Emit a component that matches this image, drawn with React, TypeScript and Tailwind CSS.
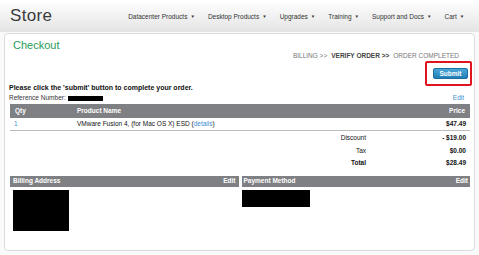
const navItems = ['Datacenter Products', 'Desktop Products', 'Upgrades', 'Training', 'Support and Docs', 'Cart'];

function Caret() {
  return <span className="ml-[3px] text-[4.5px] align-middle">▼</span>;
}

export default function App() {
  return (
    <div className="w-[479px] h-[255px] bg-[#fafafa] overflow-hidden text-[#111]" style={{ fontFamily: '"Liberation Sans", Arial, sans-serif' }}>
      {/* Header */}
      <div className="h-[32px] flex items-center bg-gradient-to-b from-[#ffffff] to-[#e4e4e4] px-[10px]">
        <div className="text-[17px] text-[#3a3a3a] tracking-[0.3px] leading-none pb-[2px]">Store</div>
        <div className="ml-[76px] flex gap-[13px] text-[6.5px] text-[#333] pt-[2px]">
          {navItems.map(n => (
            <span key={n} className="whitespace-nowrap">{n}<Caret /></span>
          ))}
        </div>
      </div>

      {/* Card */}
      <div className="relative mx-[4px] mt-[1px] h-[218px] bg-white border border-[#dcdcdc] rounded-[4px] px-[4px]">
        <div className="pl-[4px] pt-[5px] text-[11px] text-[#1e9c58] leading-[13px]">Checkout</div>
        <div className="flex justify-end pr-[11px] text-[6.5px] text-[#777] gap-[4px] leading-[8px]">
          <span>BILLING &gt;&gt;</span>
          <span className="font-bold text-[#444]">VERIFY ORDER &gt;&gt;</span>
          <span>ORDER COMPLETED</span>
        </div>

        <div className="flex justify-end pr-[2px] mt-[4px] h-[19px]">
          <div className="relative w-[35px] h-[11px] mt-[4px] rounded-[2px] bg-gradient-to-b from-[#4aa8d8] to-[#1f7fb5] border border-[#1b6f9f] text-white text-[6.5px] font-bold flex items-center justify-center">
            Submit
            <div className="absolute -left-[9px] -top-[8px] w-[47px] h-[25px] border-2 border-[#e0141e] rounded-[2px]" />
          </div>
        </div>

        <div className="text-[7px] font-bold leading-[10px]">Please click the 'submit' button to complete your order.</div>
        <div className="flex items-center justify-between h-[10px] text-[6.5px]">
          <div className="flex items-center">
            <span className="text-[#333]">Reference Number:</span>
            <span className="ml-[2px] w-[35px] h-[5px] bg-black" />
          </div>
          <span className="text-[#3b8fd0] pr-[6px]">Edit</span>
        </div>

        {/* Table */}
        <div className="mt-[1px] ml-[1px]">
          <div className="h-[14px] bg-[#7f8083] text-white text-[6.5px] font-bold flex items-center px-[5px]">
            <span className="w-[62px]">Qty</span>
            <span className="flex-1">Product Name</span>
            <span>Price</span>
          </div>
          <div className="h-[13px] flex items-center px-[4px] text-[6.5px] border-b border-[#bbb]">
            <span className="w-[63px] text-[#3b8fd0]">1</span>
            <span className="flex-1">VMware Fusion 4, (for Mac OS X) ESD (<span className="text-[#3b8fd0]">details</span>)</span>
            <span className="font-bold">$47.49</span>
          </div>
          <div className="pt-[1px] text-[6.5px]">
            {[['Discount', '- $19.00', ''], ['Tax', '$0.00', ''], ['Total', '$28.49', 'font-bold']].map(([l, v, c]) => (
              <div key={l} className="h-[12.5px] flex items-center pr-[4px]">
                <span className={`flex-1 text-right pr-[60px] ${c}`}>{l}</span>
                <span className="w-[40px] text-right font-bold">{v}</span>
              </div>
            ))}
          </div>
        </div>

        {/* Address / payment */}
        <div className="mt-[6px] ml-[1px] flex gap-[3px]">
          <div className="flex-1">
            <div className="h-[11px] bg-[#7f8083] text-white text-[6.5px] font-bold flex items-center justify-between px-[3px]">
              <span>Billing Address</span>
              <span>Edit</span>
            </div>
            <div className="mt-[3px] ml-[3px] w-[56px] h-[41px] bg-black" />
          </div>
          <div className="flex-1">
            <div className="h-[11px] bg-[#7f8083] text-white text-[6.5px] font-bold flex items-center justify-between px-[2px]">
              <span>Payment Method</span>
              <span>Edit</span>
            </div>
            <div className="mt-[3px] w-[68px] h-[17px] bg-black" />
          </div>
        </div>
      </div>
    </div>
  );
}
